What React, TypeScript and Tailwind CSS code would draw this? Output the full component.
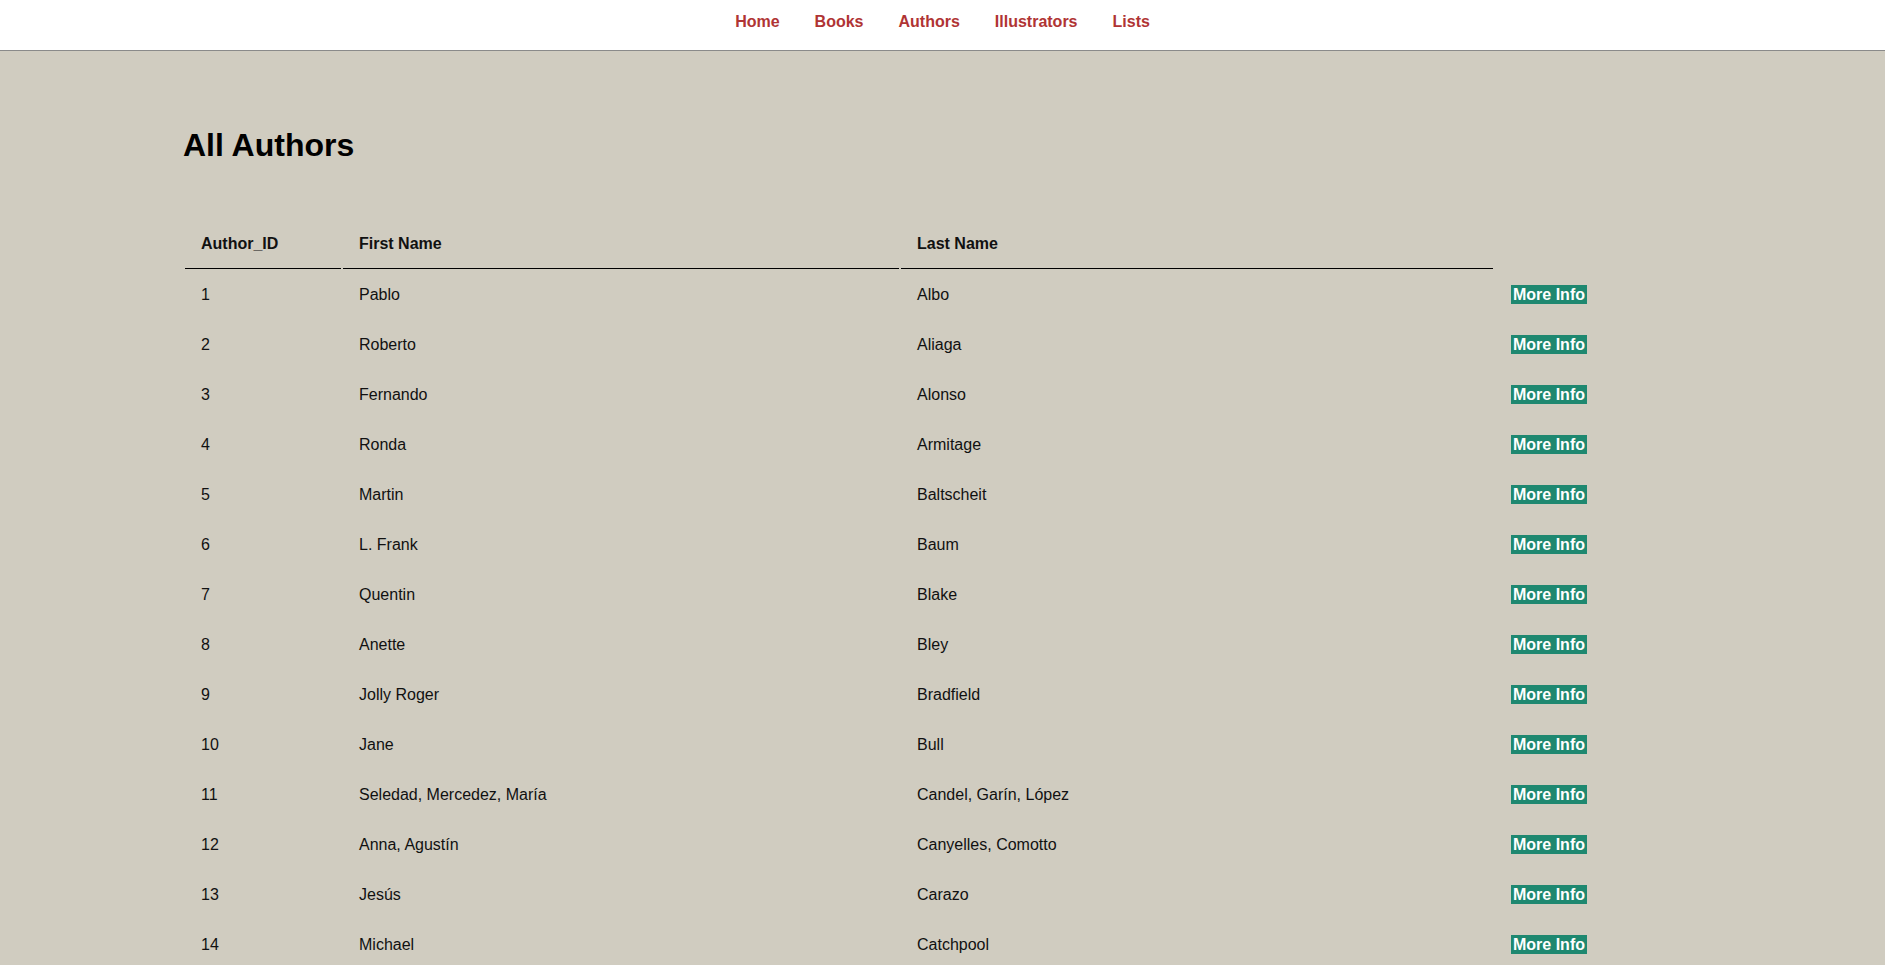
const authors = [
  { id: 1, first: "Pablo", last: "Albo" },
  { id: 2, first: "Roberto", last: "Aliaga" },
  { id: 3, first: "Fernando", last: "Alonso" },
  { id: 4, first: "Ronda", last: "Armitage" },
  { id: 5, first: "Martin", last: "Baltscheit" },
  { id: 6, first: "L. Frank", last: "Baum" },
  { id: 7, first: "Quentin", last: "Blake" },
  { id: 8, first: "Anette", last: "Bley" },
  { id: 9, first: "Jolly Roger", last: "Bradfield" },
  { id: 10, first: "Jane", last: "Bull" },
  { id: 11, first: "Seledad, Mercedez, María", last: "Candel, Garín, López" },
  { id: 12, first: "Anna, Agustín", last: "Canyelles, Comotto" },
  { id: 13, first: "Jesús", last: "Carazo" },
  { id: 14, first: "Michael", last: "Catchpool" },
];

const links = ["Home", "Books", "Authors", "Illustrators", "Lists"];

export default function App() {
  return (
    <div className="min-h-screen bg-[#d0ccc0] font-['Liberation_Sans',Arial,sans-serif] text-[#111]">
      {/* Top nav */}
      <nav className="h-[51px] bg-white border-b border-[#8a8a8a] pt-[13px]">
        <ul className="flex justify-center gap-[35px] text-[16px] leading-[18px] font-bold">
          {links.map((l) => (
            <li key={l}>
              <a href="#" className="text-[#b03434]">{l}</a>
            </li>
          ))}
        </ul>
      </nav>

      <main className="mx-auto w-[1519px] pb-6">
        <h1 className="mt-[76px] mb-[54px] text-[32px] leading-[37px] font-bold text-black">All Authors</h1>

        <table className="table-fixed w-[1424px] border-separate border-spacing-[2px] text-[16px] leading-[18px] text-left">
          <thead>
            <tr>
              <th className="w-[156px] px-4 pt-[15px] pb-[15px] border-b border-black font-bold">Author_ID</th>
              <th className="w-[556px] px-4 pt-[15px] pb-[15px] border-b border-black font-bold">First Name</th>
              <th className="w-[592px] px-4 pt-[15px] pb-[15px] border-b border-black font-bold">Last Name</th>
              <th className="w-[110px]"></th>
            </tr>
          </thead>
          <tbody>
            {authors.map((a) => (
              <tr key={a.id}>
                <td className="px-4 py-[15px]">{a.id}</td>
                <td className="px-4 py-[15px]">{a.first}</td>
                <td className="px-4 py-[15px]">{a.last}</td>
                <td className="px-4 py-[15px] whitespace-nowrap">
                  <a href="#" className="bg-[#1e8870] text-white font-bold px-[2px] py-px">More Info</a>
                </td>
              </tr>
            ))}
          </tbody>
        </table>
      </main>
    </div>
  );
}
